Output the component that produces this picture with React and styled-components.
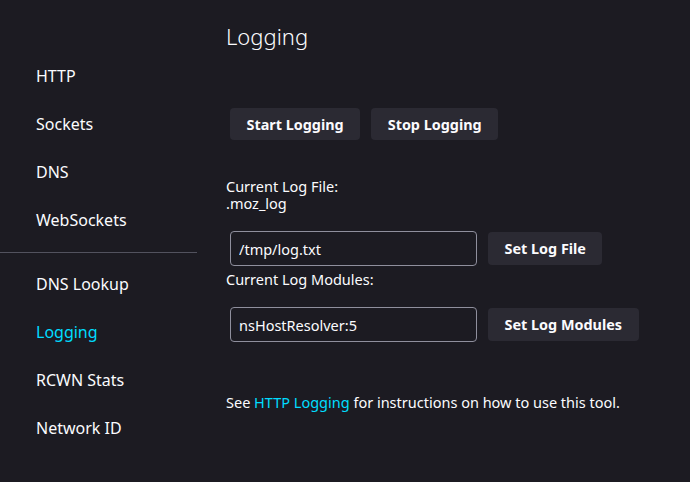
import styled, { createGlobalStyle } from 'styled-components'

const GlobalStyle = createGlobalStyle`
    html, body {
        margin: 0;
        padding: 0;
        background: #1c1b22;
        color: #fbfbfe;
        font-family: "Noto Sans", "Open Sans", sans-serif;
    }
`

const Page = styled.div`
    display: flex;
    width: 690px;
    height: 482px;
    background: #1c1b22;
    overflow: hidden;
`

const Sidebar = styled.nav`
    width: 197px;
    flex-shrink: 0;
    padding-top: 52px;
    display: flex;
    flex-direction: column;
`

const NavItem = styled.div`
    height: 48px;
    display: flex;
    align-items: center;
    padding-left: 36px;
    font-size: 16px;
    color: ${(p) => (p.$active ? '#00ddff' : '#fbfbfe')};
`

const Separator = styled.div`
    height: 1px;
    margin: 8px 0 7px;
    background: #52525e;
`

const Main = styled.main`
    flex: 1;
    padding: 21px 0 0 29px;
    display: flex;
    flex-direction: column;
    align-items: flex-start;
`

const Title = styled.h1`
    margin: 0;
    font-size: 22px;
    font-weight: 300;
    line-height: 30px;
`

const ButtonRow = styled.div`
    display: flex;
    gap: 11px;
    margin: 57px 0 0 4px;
`

const Button = styled.button`
    height: ${(p) => p.$h || 32}px;
    padding: 0 16.5px;
    border: none;
    border-radius: 4px;
    background: #2b2a33;
    color: #fbfbfe;
    font-family: inherit;
    font-size: 14.4px;
    font-weight: 700;
`

const Info = styled.div`
    font-size: 14.5px;
    line-height: 17px;
    margin-top: ${(p) => p.$top || 0}px;
`

const FieldRow = styled.div`
    display: flex;
    align-items: center;
    gap: 11px;
    margin: ${(p) => p.$top || 0}px 0 0 4px;
`

const Input = styled.input`
    box-sizing: border-box;
    width: 247px;
    height: 35px;
    padding: 0 8px;
    border: 1px solid #8f8f9d;
    border-radius: 4px;
    background: #1c1b22;
    color: #fbfbfe;
    font-family: inherit;
    font-size: 14.5px;
    outline: none;
`

const Footer = styled.p`
    margin: 52px 0 0;
    font-size: 14.5px;
    line-height: 17px;
`

const Link = styled.a`
    color: #00ddff;
    text-decoration: none;
`

const App = () => {
    return (
        <Page>
            <GlobalStyle />
            <Sidebar>
                <NavItem>HTTP</NavItem>
                <NavItem>Sockets</NavItem>
                <NavItem>DNS</NavItem>
                <NavItem>WebSockets</NavItem>
                <Separator />
                <NavItem>DNS Lookup</NavItem>
                <NavItem $active>Logging</NavItem>
                <NavItem>RCWN Stats</NavItem>
                <NavItem>Network ID</NavItem>
            </Sidebar>

            <Main>
                <Title>Logging</Title>

                <ButtonRow>
                    <Button>Start Logging</Button>
                    <Button>Stop Logging</Button>
                </ButtonRow>

                <Info $top={38}>
                    Current Log File:
                    <br />
                    .moz_log
                </Info>

                <FieldRow $top={19}>
                    <Input defaultValue="/tmp/log.txt" />
                    <Button $h={33}>Set Log File</Button>
                </FieldRow>

                <Info $top={5}>Current Log Modules:</Info>

                <FieldRow $top={19}>
                    <Input defaultValue="nsHostResolver:5" />
                    <Button $h={33}>Set Log Modules</Button>
                </FieldRow>

                <Footer>
                    See <Link href="#">HTTP Logging</Link> for instructions on how to use this tool.
                </Footer>
            </Main>
        </Page>
    )
}

export default App
